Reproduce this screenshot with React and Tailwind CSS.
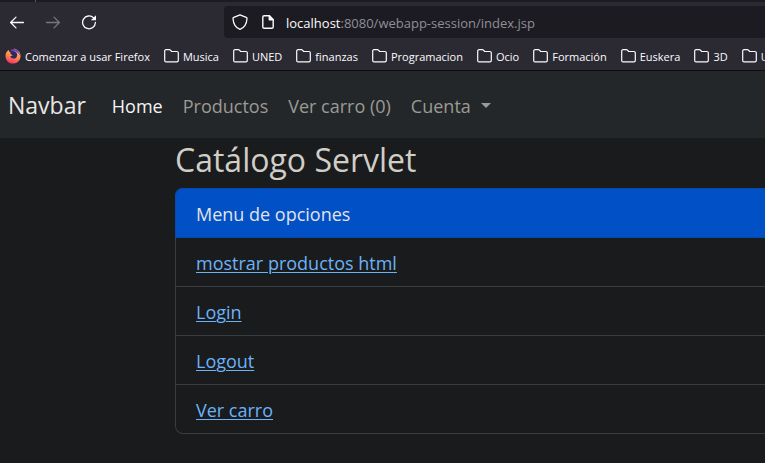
import React from "react";

const bookmarks = ["Musica", "UNED", "finanzas", "Programacion", "Ocio", "Formación", "Euskera", "3D", "U"];

const menuOptions = ["mostrar productos html", "Login", "Logout", "Ver carro"];

function ArrowIcon({ className }) {
  return (
    <svg viewBox="0 0 16 16" className={className} fill="none" stroke="currentColor" strokeWidth="1.3" strokeLinecap="round" strokeLinejoin="round" aria-hidden="true">
      <path d="M14.4 8.500H1.800M7 3.100 1.600 8.500 7 13.900" />
    </svg>
  );
}

function ReloadIcon() {
  return (
    <svg viewBox="0 0 16 16" className="size-4" fill="none" aria-hidden="true">
      <path d="M12.6 3.9A6.400 6.400 0 1 0 14.400 8.500" stroke="currentColor" strokeWidth="1.3" strokeLinecap="round" />
      <path d="M15 1.200v4.600a.5.5 0 0 1-.5.5H9.900z" fill="currentColor" />
    </svg>
  );
}

function ShieldIcon() {
  return (
    <svg viewBox="0 0 16 16" className="size-4" fill="none" stroke="currentColor" strokeWidth="1.3" strokeLinejoin="round" aria-hidden="true">
      <path d="M8 .8 14.2 3.4c.6.3.9.7.8 1.300C14.600 10 12.300 13.800 8 15.300 3.700 13.800 1.400 10 1 4.700c-.1-.6.2-1 .8-1.300z" />
    </svg>
  );
}

function PageIcon() {
  return (
    <svg viewBox="0 0 12 14" className="h-3.5 w-3" fill="none" stroke="currentColor" strokeWidth="1.4" strokeLinejoin="round" aria-hidden="true">
      <path d="M7.300.8H2.200C1.400.8.800 1.300.800 2v10c0 .7.600 1.200 1.400 1.200h7.600c.8 0 1.400-.5 1.400-1.200V4.700z" />
      <path d="M7.300.8v3.900h3.900z" fill="currentColor" />
    </svg>
  );
}

function FolderIcon() {
  return (
    <svg viewBox="0 0 15 14" className="h-3.5 w-[15px] shrink-0" fill="none" stroke="currentColor" strokeWidth="1.200" strokeLinejoin="round" aria-hidden="true">
      <path d="M.700 11.600V2C.700 1.200 1.200.700 2 .700h3.400c.4 0 .7.100 1 .4l1.300 1.400h5.200c.8 0 1.400.5 1.400 1.300v7.800c0 .8-.6 1.300-1.400 1.300H2c-.8 0-1.300-.5-1.300-1.300z" />
    </svg>
  );
}

function FirefoxIcon() {
  return (
    <svg viewBox="0 0 16 16" className="size-4 shrink-0" aria-hidden="true">
      <defs>
        <linearGradient id="flame" x1="0.7" y1="0.1" x2="0.4" y2="1">
          <stop offset="0" stopColor="#ffc24a" />
          <stop offset="0.5" stopColor="#ff8a4a" />
          <stop offset="1" stopColor="#f5306c" />
        </linearGradient>
        <linearGradient id="crest" x1="0" y1="0" x2="1" y2="1">
          <stop offset="0" stopColor="#5a35b8" />
          <stop offset="1" stopColor="#9148e8" />
        </linearGradient>
      </defs>
      <path d="M2.400 3C1 4.500.400 6.300.500 8.400.700 12.500 4 15.600 8 15.600s7.400-3.100 7.500-7.400c0-2-.6-3.700-1.700-5C12 1.700 10.500 1 9.200.500L8.500 3.500 5 4.200C4.200 3.700 3.900 2.900 3.800 2c-.6.400-1 .9-1.400 1z" fill="url(#flame)" />
      <path d="M6 1.500C9 .1 12.700 1.100 14.200 4.200c.6 1.200.8 2.500.6 3.600-.7-1.700-1.500-2.500-2.700-3.300C10.600 3.300 8.500 2.800 5.500 3.600z" fill="url(#crest)" />
      <path d="M5.300 4.300c1.700-1.700 5-1.500 6.300.6 1.300 2.200.4 4.900-2 5.500-2 .5-4-.6-4.300-2.500 1 .3 1.900 0 2.500-.7-1.500-.3-2.600-1.300-2.500-2.900z" fill="#2b2a5f" />
    </svg>
  );
}

function BrowserChrome() {
  return (
    <header className="border-b border-[#0c0c0d] bg-[#2b2a33] text-[#fbfbfe]">
      <div className="flex h-0.5 bg-[#1c1b22] pl-[35px]">
        <span className="w-px bg-[#5b5b66]" />
      </div>
      <div className="flex items-center pt-1">
        <div className="flex w-56 shrink-0 items-center gap-5 pl-[9px]">
          <button type="button" aria-label="Atrás"><ArrowIcon className="block size-4" /></button>
          <button type="button" aria-label="Adelante" disabled className="text-[#77767e]"><ArrowIcon className="block size-4 -scale-x-100" /></button>
          <button type="button" aria-label="Recargar"><ReloadIcon /></button>
        </div>
        <div className="flex h-8 min-w-0 grow items-center rounded-l bg-[#1c1b22] pl-2">
          <ShieldIcon />
          <span className="pr-3 pl-3.5"><PageIcon /></span>
          <a href="#url" className="truncate pt-0.5 text-[13px] leading-5 text-[#8f8f97]">
            <span className="text-[#fbfbfe]">localhost</span>:8080/webapp-session/index.jsp
          </a>
        </div>
      </div>
      <nav aria-label="Marcadores" className="flex h-8 items-center gap-3.5 overflow-hidden pt-1 pl-[5px] text-[11px] leading-4 whitespace-nowrap">
        <a href="#firefox" className="flex items-center gap-1"><FirefoxIcon /><span className="pt-0.5">Comenzar a usar Firefox</span></a>
        {bookmarks.map((name) => (
          <a key={name} href="#marcador" className="flex items-center gap-1"><FolderIcon /><span className="pt-0.5">{name}</span></a>
        ))}
      </nav>
    </header>
  );
}

function Navbar() {
  return (
    <nav aria-label="Principal" className="flex h-[67px] items-center bg-[#23272a] pt-0.5 pl-2 text-lg whitespace-nowrap text-[#9c9a94]">
      <a href="#inicio" className="mr-[26px] text-[23px] text-[#e8e6e3]">Navbar</a>
      <div className="flex items-center gap-5">
        <a href="#home" className="text-[#f5f4f2]">Home</a>
        <a href="#productos">Productos</a>
        <a href="#carro">Ver carro (0)</a>
        <button type="button" className="flex items-center gap-2.5">
          Cuenta
          <svg viewBox="0 0 10 5" className="h-[5px] w-2.5" fill="currentColor" aria-hidden="true"><path d="M0 0h10L5 5z" /></svg>
        </button>
      </div>
    </nav>
  );
}

export default function App() {
  return (
    <div className="min-h-screen overflow-hidden bg-[#1a1b1c] font-['Open_Sans','Noto_Sans',sans-serif]">
      <BrowserChrome />
      <Navbar />
      <main className="pb-7 pl-[175px]">
        <h1 className="pt-0.5 pb-2 text-[32px] leading-10 text-[#d1cdc7]">Catálogo Servlet</h1>
        <section className="rounded-l-lg border border-r-0 border-[#393d40] text-lg">
          <h2 className="-mt-px -ml-px flex h-[50px] items-center rounded-tl-lg border border-r-0 border-[#0849ad] bg-[#0250c5] pt-0.5 pl-5 text-[#e1e3e6]">Menu de opciones</h2>
          <ul className="divide-y divide-[#393d40]">
            {menuOptions.map((option) => (
              <li key={option} className="flex h-[49px] items-center pt-0.5 pl-5 last:h-12">
                <a href="#opcion" className="text-[#6cb2f9] underline decoration-1 underline-offset-2">{option}</a>
              </li>
            ))}
          </ul>
        </section>
      </main>
    </div>
  );
}
